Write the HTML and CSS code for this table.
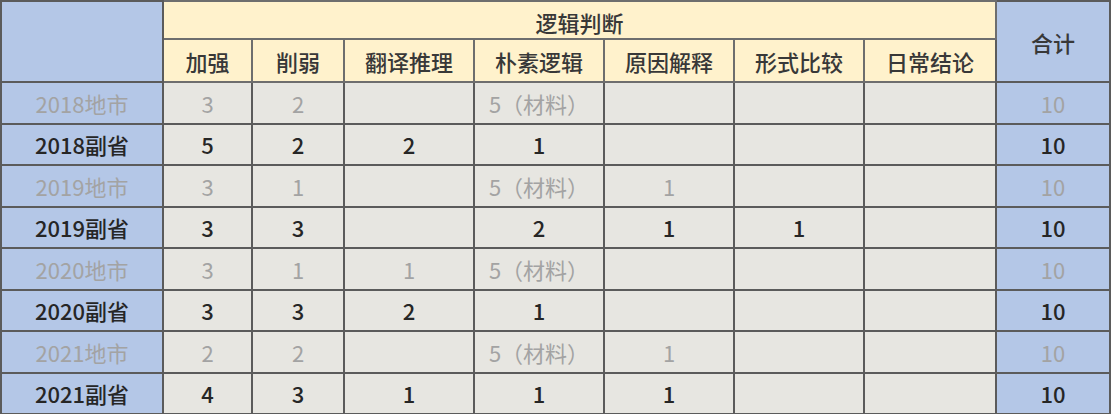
FILE: index.html
```html
<!DOCTYPE html>
<html lang="zh">
<head>
<meta charset="utf-8">
<link rel="stylesheet" href="styles.css">
</head>
<body>
<table class="tbl">
  <colgroup>
    <col class="c-label"><col class="c-a"><col class="c-b"><col class="c-m"><col class="c-m"><col class="c-m"><col class="c-m"><col class="c-n"><col class="c-total">
  </colgroup>
  <thead>
    <tr class="h1">
      <th class="blue" rowspan="2"></th>
      <th class="yellow" colspan="7">逻辑判断</th>
      <th class="blue" rowspan="2">合计</th>
    </tr>
    <tr class="h2">
      <th class="yellow">加强</th>
      <th class="yellow">削弱</th>
      <th class="yellow">翻译推理</th>
      <th class="yellow">朴素逻辑</th>
      <th class="yellow">原因解释</th>
      <th class="yellow">形式比较</th>
      <th class="yellow">日常结论</th>
    </tr>
  </thead>
  <tbody>
    <tr class="city"><th>2018地市</th><td>3</td><td>2</td><td></td><td>5（材料）</td><td></td><td></td><td></td><td class="total">10</td></tr>
    <tr class="prov"><th>2018副省</th><td>5</td><td>2</td><td>2</td><td>1</td><td></td><td></td><td></td><td class="total">10</td></tr>
    <tr class="city"><th>2019地市</th><td>3</td><td>1</td><td></td><td>5（材料）</td><td>1</td><td></td><td></td><td class="total">10</td></tr>
    <tr class="prov"><th>2019副省</th><td>3</td><td>3</td><td></td><td>2</td><td>1</td><td>1</td><td></td><td class="total">10</td></tr>
    <tr class="city"><th>2020地市</th><td>3</td><td>1</td><td>1</td><td>5（材料）</td><td></td><td></td><td></td><td class="total">10</td></tr>
    <tr class="prov"><th>2020副省</th><td>3</td><td>3</td><td>2</td><td>1</td><td></td><td></td><td></td><td class="total">10</td></tr>
    <tr class="city"><th>2021地市</th><td>2</td><td>2</td><td></td><td>5（材料）</td><td>1</td><td></td><td></td><td class="total">10</td></tr>
    <tr class="prov"><th>2021副省</th><td>4</td><td>3</td><td>1</td><td>1</td><td>1</td><td></td><td></td><td class="total">10</td></tr>
  </tbody>
</table>
</body>
</html>
```

FILE: styles.css
```css
html, body {
  margin: 0;
  padding: 0;
  background: #ffffff;
}

.tbl {
  border-collapse: collapse;
  table-layout: fixed;
  width: 1110px;
  font-family: "Noto Sans CJK SC", "Noto Sans", sans-serif;
  font-size: 22px;
  color: #2b2b2b;
}

.c-label { width: 162px; }
.c-a { width: 89px; }
.c-b { width: 92px; }
.c-m { width: 130px; }
.c-n { width: 132px; }
.c-total { width: 114px; }

.tbl th,
.tbl td {
  border: 2px solid #5b5b5b;
  padding: 0;
  text-align: center;
  vertical-align: middle;
  line-height: 1;
  overflow: hidden;
  white-space: nowrap;
}

.tbl thead th {
  font-weight: 500;
  color: #383838;
}

.h1 { height: 38px; }
.h2 { height: 43px; }
.h1 .yellow { padding-top: 3px; }

.tbl tbody tr { height: 41.5px; }

.blue { background: #b4c7e7; }
.yellow { background: #fff2cc; }
.tbl thead .yellow { border-color: #6e6e6e; }

.tbl tbody th {
  background: #b4c7e7;
}

.tbl tbody td {
  background: #e7e6e1;
}

.tbl tbody td.total {
  background: #b4c7e7;
}

.tbl .city th,
.tbl .city td {
  color: #a3a3a3;
  font-weight: 400;
}

.tbl .prov th,
.tbl .prov td {
  color: #262626;
  font-weight: 500;
}
```
